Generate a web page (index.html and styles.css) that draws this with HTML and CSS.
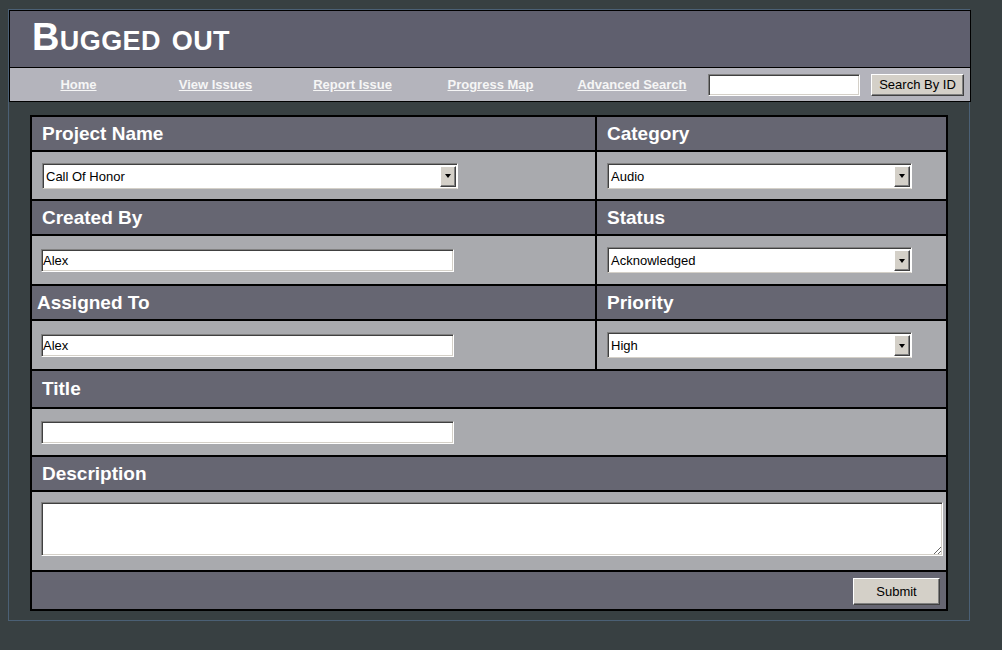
FILE: index.html
```html
<!DOCTYPE html>
<html>
<head>
<meta charset="utf-8">
<title>Bugged out</title>
<link rel="stylesheet" href="styles.css">
</head>
<body>
<div class="page">
  <div class="header">
    <div class="title">Bugged out</div>
    <div class="nav">
      <div class="links">
        <a href="#">Home</a>
        <a href="#">View Issues</a>
        <a href="#">Report Issue</a>
        <a href="#">Progress Map</a>
        <a href="#">Advanced Search</a>
      </div>
      <input class="field search" type="text">
      <button class="btn search-btn" type="button">Search By ID</button>
    </div>
  </div>

  <form class="form">
    <div class="cell head">Project Name</div>
    <div class="cell head">Category</div>
    <div class="cell body">
      <div class="select wide"><span class="sel-text">Call Of Honor</span><span class="arrow"></span></div>
    </div>
    <div class="cell body">
      <div class="select narrow"><span class="sel-text">Audio</span><span class="arrow"></span></div>
    </div>

    <div class="cell head">Created By</div>
    <div class="cell head">Status</div>
    <div class="cell body tall">
      <input class="field text" type="text" value="Alex">
    </div>
    <div class="cell body tall">
      <div class="select narrow"><span class="sel-text">Acknowledged</span><span class="arrow"></span></div>
    </div>

    <div class="cell head tight">Assigned To</div>
    <div class="cell head">Priority</div>
    <div class="cell body tall">
      <input class="field text" type="text" value="Alex">
    </div>
    <div class="cell body tall">
      <div class="select narrow"><span class="sel-text">High</span><span class="arrow"></span></div>
    </div>

    <div class="cell head full title-head">Title</div>
    <div class="cell body full short">
      <input class="field text" type="text">
    </div>

    <div class="cell head full">Description</div>
    <div class="cell body full area-row">
      <textarea class="area"></textarea>
    </div>

    <div class="cell full foot">
      <button class="btn submit" type="button">Submit</button>
    </div>
  </form>
</div>
</body>
</html>
```

FILE: styles.css
```css
html, body {
  margin: 0;
  padding: 0;
  background: #384042;
  font-family: "Liberation Sans", Arial, sans-serif;
}

.page {
  width: 960px;
  margin: 9px 0 0 8px;
  border: 1px solid #4b6075;
  padding-bottom: 9px;
}

.header {
  width: 960px;
  border: 1px solid #000;
}

.title {
  height: 57px;
  box-sizing: border-box;
  padding: 2px 0 0 22px;
  background: #5f5f6e;
  color: #fff;
  font-weight: bold;
  font-size: 38px;
  letter-spacing: 0.4px;
  line-height: 48px;
  font-variant: small-caps;
  border-bottom: 1px solid #000;
}

.nav {
  height: 33px;
  background: #b4b4bc;
  display: flex;
  align-items: center;
}

.links {
  display: grid;
  grid-template-columns: 137px 137px 137px 139px 144px;
  margin-left: 0;
}

.links a {
  text-align: center;
  color: #f6f6f6;
  font-weight: bold;
  font-size: 13px;
  text-decoration: underline;
}

.field {
  box-sizing: border-box;
  background: #fff;
  border-top: 1px solid #808080;
  border-left: 1px solid #808080;
  border-right: 1px solid #fff;
  border-bottom: 1px solid #fff;
  box-shadow: inset 1px 1px 0 #404040, inset -1px -1px 0 #d4d0c8;
  font-family: "Liberation Sans", Arial, sans-serif;
  font-size: 13px;
  color: #000;
  padding: 0 2px;
  margin: 0;
  outline: none;
}

.search {
  width: 152px;
  height: 22px;
  margin-left: 4px;
}

.btn {
  box-sizing: border-box;
  background: #d4d0c8;
  border-top: 1px solid #fff;
  border-left: 1px solid #fff;
  border-right: 1px solid #404040;
  border-bottom: 1px solid #404040;
  box-shadow: inset -1px -1px 0 #808080;
  font-family: "Liberation Sans", Arial, sans-serif;
  font-size: 13px;
  color: #000;
  padding: 0;
  margin: 0;
}

.search-btn {
  width: 93px;
  height: 22px;
  margin-left: 11px;
}

.form {
  width: 918px;
  box-sizing: border-box;
  margin: 13px 0 0 21px;
  background: #000;
  padding: 2px;
  display: grid;
  grid-template-columns: 563px 349px;
  gap: 2px;
}

.cell {
  box-sizing: border-box;
}

.full {
  grid-column: 1 / -1;
}

.head {
  height: 33px;
  background: #666672;
  color: #fff;
  font-weight: bold;
  font-size: 19px;
  display: flex;
  align-items: center;
  padding-left: 10px;
}

.head.tight {
  padding-left: 5px;
}

.title-head {
  height: 36px;
}

.body {
  height: 47px;
  background: #a9aaae;
  display: flex;
  align-items: center;
  padding-left: 10px;
}

.body.tall {
  height: 48px;
}

.body.short {
  height: 46px;
  padding-left: 9px;
}

.body.tall .text {
  margin-left: -1px;
}

.text {
  width: 413px;
  height: 23px;
  padding-left: 1px;
}

.select {
  box-sizing: border-box;
  height: 26px;
  display: flex;
  align-items: stretch;
  background: #fff;
  border-top: 1px solid #808080;
  border-left: 1px solid #808080;
  border-right: 1px solid #fff;
  border-bottom: 1px solid #d4d0c8;
  box-shadow: inset 1px 1px 0 #404040;
  padding: 2px 1px 1px 2px;
  font-size: 13px;
  color: #000;
}

.select.wide {
  width: 416px;
}

.select.narrow {
  width: 305px;
}

.sel-text {
  flex: 1;
  display: flex;
  align-items: center;
  padding-left: 1px;
}

.arrow {
  width: 16px;
  box-sizing: border-box;
  background: #d4d0c8;
  border-top: 1px solid #fff;
  border-left: 1px solid #fff;
  border-right: 1px solid #404040;
  border-bottom: 1px solid #404040;
  box-shadow: inset -1px -1px 0 #808080;
  display: flex;
  align-items: center;
  justify-content: center;
}

.arrow::after {
  content: "";
  width: 0;
  height: 0;
  border-left: 3px solid transparent;
  border-right: 3px solid transparent;
  border-top: 4px solid #000;
  margin-right: 1px;
}

.area-row {
  height: 78px;
  align-items: flex-start;
  padding-top: 10px;
  padding-left: 9px;
}

.area {
  box-sizing: border-box;
  width: 902px;
  height: 54px;
  background: #fff;
  border-top: 1px solid #808080;
  border-left: 1px solid #808080;
  border-right: 1px solid #fff;
  border-bottom: 1px solid #fff;
  box-shadow: inset 1px 1px 0 #404040, inset -1px -1px 0 #d4d0c8;
  margin: 0;
  outline: none;
  resize: both;
}

.foot {
  height: 37px;
  background: #666672;
  display: flex;
  align-items: center;
  justify-content: flex-end;
  padding-right: 6px;
}

.submit {
  width: 87px;
  height: 27px;
  margin-top: 1px;
}
```
